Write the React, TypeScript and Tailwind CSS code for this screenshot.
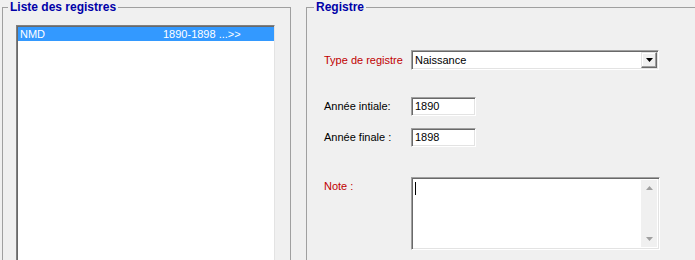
import React from "react";

const sunken =
  "border border-t-[#a0a0a0] border-l-[#a0a0a0] border-r-white border-b-white shadow-[inset_1px_1px_0_#696969,inset_-1px_-1px_0_#e3e3e3]";

function Label({ text, red }: { text: string; red?: boolean }) {
  return (
    <div className={`w-[87px] shrink-0 ${red ? "text-[#c00000]" : "text-black"}`}>
      {text}
    </div>
  );
}

function YearField({ label, value }: { label: string; value: string }) {
  return (
    <div className="flex items-center h-[19px]">
      <Label text={label} />
      <div className={`${sunken} w-[65px] h-[19px] bg-white pl-[3px] leading-[17px] text-black`}>
        {value}
      </div>
    </div>
  );
}

export default function App() {
  return (
    <div
      className="flex w-[695px] h-[260px] overflow-hidden bg-[#f0f0f0] pl-[2px] text-[11px]"
      style={{ fontFamily: '"Liberation Sans", Arial, sans-serif' }}
    >
      {/* Liste des registres */}
      <fieldset className="w-[289px] h-[320px] shrink-0 border border-[#a0a0a0]">
        <legend className="ml-[5px] px-[2px] text-[12px] font-bold leading-[14px] text-[#0000a8]">
          Liste des registres
        </legend>
        <div className="ml-[13px] mt-[11px] w-[259px] h-[300px] border border-t-[#808080] border-l-[#808080] border-r-[#e3e3e3] border-b-[#e3e3e3] shadow-[inset_1px_1px_0_#696969] bg-white pt-[1px] pl-[1px]">
          <div className="flex h-[14px] bg-[#3399ff] text-white leading-[14px]">
            <span className="pl-[2px] w-[145px]">NMD</span>
            <span>1890-1898 ...&gt;&gt;</span>
          </div>
        </div>
      </fieldset>

      {/* Registre */}
      <fieldset className="ml-[15px] w-[420px] h-[320px] shrink-0 border border-[#a0a0a0]">
        <legend className="ml-[7px] px-[2px] text-[12px] font-bold leading-[14px] text-[#0000a8]">
          Registre
        </legend>
        <div className="pl-[17px] pt-[36px] flex flex-col">
          <div className="flex items-center h-[20px]">
            <Label text="Type de registre" red />
            <div className={`${sunken} w-[248px] h-[20px] bg-white flex items-center justify-between pl-[3px] pr-[1px] text-black`}>
              <span>Naissance</span>
              <div className="w-[16px] h-[16px] bg-[#f0f0f0] border border-t-[#e3e3e3] border-l-[#e3e3e3] border-r-[#696969] border-b-[#696969] shadow-[inset_-1px_-1px_0_#a0a0a0,inset_1px_1px_0_white] flex items-center justify-center">
                <svg width="7" height="4" viewBox="0 0 7 4">
                  <path d="M0 0H7L3.5 4Z" fill="#000" />
                </svg>
              </div>
            </div>
          </div>

          <div className="mt-[27px]">
            <YearField label="Année intiale:" value="1890" />
          </div>
          <div className="mt-[12px]">
            <YearField label="Année finale :" value="1898" />
          </div>

          <div className="mt-[30px] flex">
            <div className="pt-[1px]">
              <Label text="Note :" red />
            </div>
            <div className={`${sunken} w-[249px] h-[73px] bg-white flex p-[2px]`}>
              <div className="flex-1 pl-[1px] pt-[2px]">
                <div className="w-[1px] h-[13px] bg-black" />
              </div>
              <div className="w-[16px] bg-[#f0f0f0] flex flex-col justify-between items-center py-[6px]">
                <svg width="7" height="4" viewBox="0 0 7 4">
                  <path d="M0 4H7L3.5 0Z" fill="#a0a0a0" />
                </svg>
                <svg width="7" height="4" viewBox="0 0 7 4">
                  <path d="M0 0H7L3.5 4Z" fill="#a0a0a0" />
                </svg>
              </div>
            </div>
          </div>
        </div>
      </fieldset>
    </div>
  );
}
